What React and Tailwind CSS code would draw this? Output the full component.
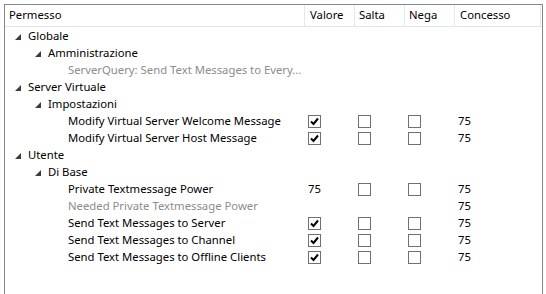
import React from "react";

const Tri = () => (
  <svg width="6" height="6" viewBox="0 0 6 6" className="shrink-0">
    <polygon points="6,0 6,6 0,6" fill="#3c3c3c" />
  </svg>
);

const Check = ({ checked }) => (
  <div className="w-[13px] h-[13px] border border-[#707070] bg-white flex items-center justify-center">
    {checked && (
      <svg width="9" height="9" viewBox="0 0 9 9">
        <path d="M1 4.5 L3.5 7 L8 1.5" stroke="#000" strokeWidth="2" fill="none" />
      </svg>
    )}
  </div>
);

const rows = [
  { level: 0, label: "Globale", group: true },
  { level: 1, label: "Amministrazione", group: true },
  { level: 2, label: "ServerQuery: Send Text Messages to Every...", gray: true },
  { level: 0, label: "Server Virtuale", group: true },
  { level: 1, label: "Impostazioni", group: true },
  { level: 2, label: "Modify Virtual Server Welcome Message", v: "check", c: "75" },
  { level: 2, label: "Modify Virtual Server Host Message", v: "check", c: "75" },
  { level: 0, label: "Utente", group: true },
  { level: 1, label: "Di Base", group: true },
  { level: 2, label: "Private Textmessage Power", v: "75", c: "75" },
  { level: 2, label: "Needed Private Textmessage Power", gray: true, c: "75", noBoxes: true },
  { level: 2, label: "Send Text Messages to Server", v: "check", c: "75" },
  { level: 2, label: "Send Text Messages to Channel", v: "check", c: "75" },
  { level: 2, label: "Send Text Messages to Offline Clients", v: "check", c: "75" },
];

export default function App() {
  return (
    <div
      className="w-[546px] h-[294px] bg-white overflow-hidden pl-[4px] pt-[4px] text-[11.3px] text-black"
      style={{ fontFamily: '"Noto Sans", "Open Sans", sans-serif' }}
    >
      <div className="w-[539px] h-[290px] border-l border-t border-r border-[#828790] bg-white">
        <div className="flex h-[22px] border-b border-[#e5e5e5]">
          <div className="w-[300px] border-r border-[#e3e8f0] pl-[4px] flex items-center">Permesso</div>
          <div className="w-[50px] border-r border-[#e3e8f0] pl-[5px] flex items-center">Valore</div>
          <div className="w-[50px] border-r border-[#e3e8f0] pl-[4px] flex items-center">Salta</div>
          <div className="w-[50px] border-r border-[#e3e8f0] pl-[4px] flex items-center">Nega</div>
          <div className="w-[86px] border-r border-[#e3e8f0] pl-[5px] flex items-center">Concesso</div>
        </div>
        <div className="flex flex-col pt-[1px]">
          {rows.map((r, i) => (
            <div key={i} className="flex h-[17px] items-center">
              <div className="w-[300px] flex items-center">
                {r.level === 0 && (
                  <div className="flex items-center pl-[10px] gap-[7px]">
                    <Tri />
                    <span>{r.label}</span>
                  </div>
                )}
                {r.level === 1 && (
                  <div className="flex items-center pl-[30px] gap-[7px]">
                    <Tri />
                    <span>{r.label}</span>
                  </div>
                )}
                {r.level === 2 && (
                  <div className={`pl-[63px] whitespace-nowrap ${r.gray ? "text-[#8c8c8c]" : ""}`}>{r.label}</div>
                )}
              </div>
              {!r.group && !r.gray && (
                <>
                  <div className="w-[50px] pl-[3px] flex items-center">
                    {r.v === "check" ? <Check checked /> : <span>{r.v}</span>}
                  </div>
                  <div className="w-[50px] pl-[3px] flex items-center"><Check /></div>
                  <div className="w-[50px] pl-[3px] flex items-center"><Check /></div>
                  <div className="w-[86px] pl-[3px]">{r.c}</div>
                </>
              )}
              {r.noBoxes && (
                <>
                  <div className="w-[150px]" />
                  <div className="w-[86px] pl-[3px]">{r.c}</div>
                </>
              )}
            </div>
          ))}
        </div>
      </div>
    </div>
  );
}
